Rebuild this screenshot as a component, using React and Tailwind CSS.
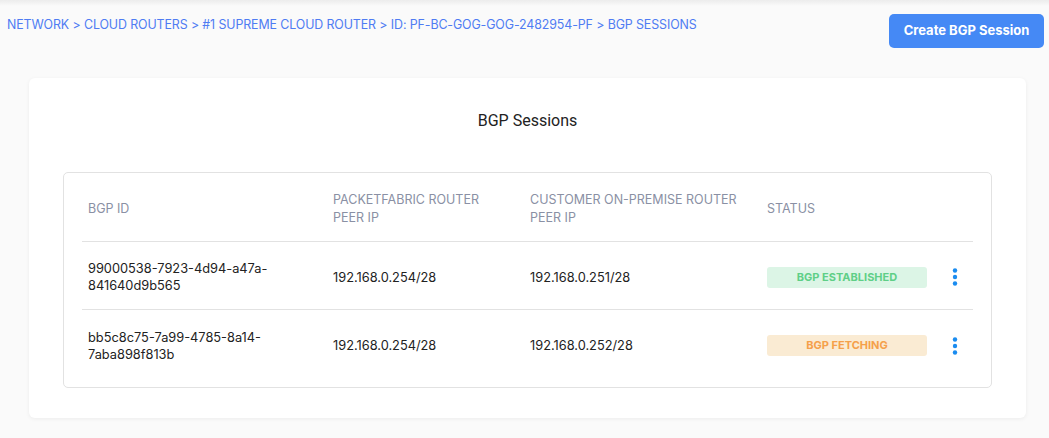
import React from "react";

const rows = [
  {
    id1: "99000538-7923-4d94-a47a-",
    id2: "841640d9b565",
    pf: "192.168.0.254/28",
    cu: "192.168.0.251/28",
    status: "BGP ESTABLISHED",
    badge: "bg-[#dcf5e6] text-[#5fcf87]",
  },
  {
    id1: "bb5c8c75-7a99-4785-8a14-",
    id2: "7aba898f813b",
    pf: "192.168.0.254/28",
    cu: "192.168.0.252/28",
    status: "BGP FETCHING",
    badge: "bg-[#faebd3] text-[#f5a04a]",
  },
];

function Kebab() {
  return (
    <svg width="6" height="18" viewBox="0 0 6 18" className="block">
      <circle cx="3" cy="2.5" r="2.2" fill="#1a8cf0" />
      <circle cx="3" cy="9" r="2.2" fill="#1a8cf0" />
      <circle cx="3" cy="15.5" r="2.2" fill="#1a8cf0" />
    </svg>
  );
}

export default function App() {
  return (
    <div className="relative min-h-[438px] w-[1049px] bg-[#fafafa] font-['Inter',sans-serif]">
      <div className="absolute left-0 right-0 top-0 h-[6px] bg-gradient-to-b from-[#ececec] to-[#fafafa]" />
      <div className="flex items-start justify-between pl-[7px] pr-[5px] pt-[14px]">
        <div className="pt-[3px] text-[12.4px] leading-[16px] text-[#4f7cf3] tracking-[-0.1px]">
          NETWORK &gt; CLOUD ROUTERS &gt; #1 SUPREME CLOUD ROUTER &gt; ID: PF-BC-GOG-GOG-2482954-PF &gt; BGP SESSIONS
        </div>
        <button className="h-[34px] w-[155px] rounded-[5px] bg-[#4589f5] text-[13px] font-bold text-white">
          Create BGP Session
        </button>
      </div>
      <div className="mx-[29px] mt-[30px] h-[340px] w-[997px] rounded-[6px] bg-white shadow-[0_1px_4px_rgba(0,0,0,0.06)]">
        <div className="pt-[31px] text-center font-['Roboto',sans-serif] text-[16px] leading-[24px] text-[#222]">
          BGP Sessions
        </div>
        <div className="mx-[34px] mt-[39px] rounded-[5px] border border-[#e2e2e2] px-[18px] pb-[9px]">
          <div className="flex h-[69px] items-center border-b border-[#e2e2e2] pt-[3px] text-[12.5px] leading-[18px] text-[#8a90a4]">
            <div className="w-[251px] pl-[6px]">BGP ID</div>
            <div className="w-[197px]">PACKETFABRIC ROUTER<br />PEER IP</div>
            <div className="w-[237px]">CUSTOMER ON-PREMISE ROUTER<br />PEER IP</div>
            <div>STATUS</div>
          </div>
          {rows.map((r, i) => (
            <div
              key={i}
              className={`flex h-[68px] items-center pt-[3px] text-[12.8px] leading-[17px] text-[#222] ${i === 0 ? "border-b border-[#e2e2e2]" : ""}`}
            >
              <div className="w-[251px] pl-[6px]">
                {r.id1}
                <br />
                {r.id2}
              </div>
              <div className="w-[197px]">{r.pf}</div>
              <div className="w-[237px]">{r.cu}</div>
              <div className={`flex h-[21px] w-[160px] items-center justify-center rounded-[3px] text-[11px] font-bold ${r.badge}`}>
                {r.status}
              </div>
              <div className="ml-[25px]">
                <Kebab />
              </div>
            </div>
          ))}
        </div>
      </div>
    </div>
  );
}
